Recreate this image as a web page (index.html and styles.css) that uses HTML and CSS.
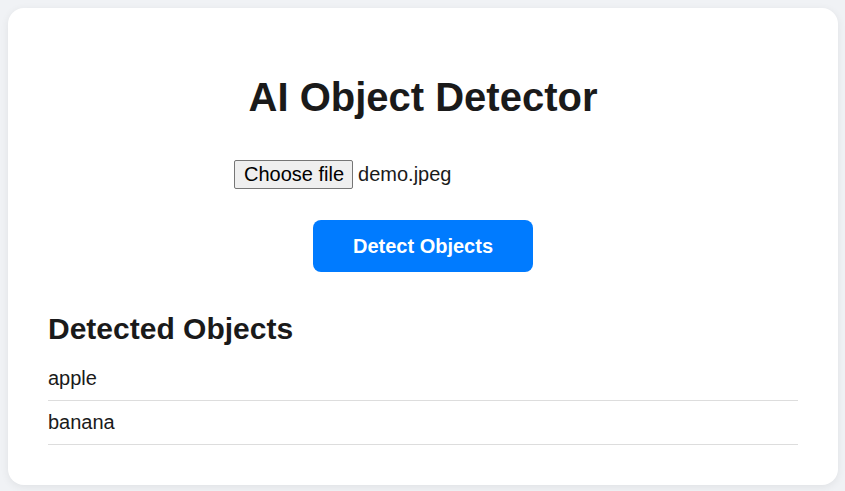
FILE: index.html
```html
<!DOCTYPE html>
<html>
<head>
<meta charset="utf-8">
<link rel="stylesheet" href="styles.css">
</head>
<body>
<div class="card">
  <h1 class="title">AI Object Detector</h1>
  <div class="upload">
    <span class="choose">Choose file</span>
    <span class="filename">demo.jpeg</span>
  </div>
  <div class="actions">
    <button class="detect">Detect Objects</button>
  </div>
  <h2 class="subtitle">Detected Objects</h2>
  <ul class="results">
    <li class="item">apple</li>
    <li class="item">banana</li>
  </ul>
</div>
</body>
</html>
```

FILE: styles.css
```css
html, body {
  margin: 0;
  padding: 0;
}
body {
  background: #f0f2f5;
  font-family: "Liberation Sans", Arial, sans-serif;
  color: #1a1a1a;
  padding: 8px;
}
.card {
  background: #fff;
  border-radius: 16px;
  box-shadow: 0 2px 8px rgba(0,0,0,0.07);
  padding: 40px;
  width: 750px;
}
.title {
  font-size: 40px;
  font-weight: bold;
  text-align: center;
  margin: 26px 0 0;
  line-height: 46px;
}
.upload {
  display: flex;
  align-items: center;
  gap: 5px;
  width: 378px;
  margin: 40px auto 0;
  height: 29px;
  font-size: 20px;
}
.choose {
  display: inline-block;
  box-sizing: border-box;
  height: 29px;
  line-height: 23px;
  padding: 2px 8px 2px 9px;
  background: #efefef;
  border: 1px solid #767676;
  border-radius: 2px;
  color: #000;
}
.filename {
  color: #1a1a1a;
}
.actions {
  display: flex;
  justify-content: center;
  margin-top: 31px;
}
.detect {
  width: 220px;
  height: 52px;
  background: #007bff;
  color: #fff;
  border: none;
  border-radius: 8px;
  font-family: "Liberation Sans", Arial, sans-serif;
  font-size: 20px;
  font-weight: bold;
}
.subtitle {
  font-size: 30px;
  font-weight: bold;
  margin: 40px 0 11px;
  line-height: 34px;
}
.results {
  list-style: none;
  margin: 0;
  padding: 0;
}
.item {
  font-size: 20px;
  line-height: 23px;
  padding: 10px 0;
  border-bottom: 1px solid #ddd;
}
```
